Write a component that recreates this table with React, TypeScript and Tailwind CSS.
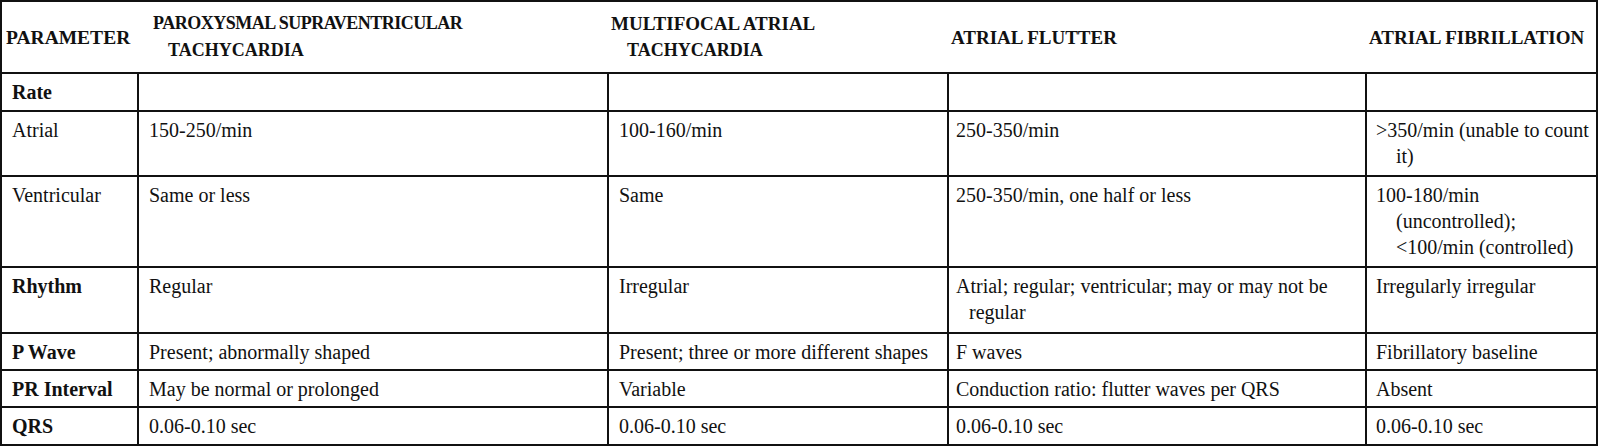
import React from "react";

type Row = {
  label: string;
  bold?: boolean;
  height: string;
  cells: string[][];
};

const cols = "grid grid-cols-[135px_470px_340px_418px_1fr]";

const pads = ["pl-[10px]", "pl-[10px]", "pl-[10px]", "pl-[7px]", "pl-[9px]"];
const hangs = ["pl-[20px]", "pl-[20px]", "pl-[13px]", "pl-[20px]"];

const rows: Row[] = [
  { label: "Rate", bold: true, height: "h-[38px]", cells: [[], [], [], []] },
  {
    label: "Atrial",
    height: "h-[65px]",
    cells: [
      ["150-250/min"],
      ["100-160/min"],
      ["250-350/min"],
      [">350/min (unable to count", "it)"],
    ],
  },
  {
    label: "Ventricular",
    height: "h-[91px]",
    cells: [
      ["Same or less"],
      ["Same"],
      ["250-350/min, one half or less"],
      ["100-180/min", "(uncontrolled);", "<100/min (controlled)"],
    ],
  },
  {
    label: "Rhythm",
    bold: true,
    height: "h-[66px]",
    cells: [
      ["Regular"],
      ["Irregular"],
      ["Atrial; regular; ventricular; may or may not be", "regular"],
      ["Irregularly irregular"],
    ],
  },
  {
    label: "P Wave",
    bold: true,
    height: "h-[37px]",
    cells: [
      ["Present; abnormally shaped"],
      ["Present; three or more different shapes"],
      ["F waves"],
      ["Fibrillatory baseline"],
    ],
  },
  {
    label: "PR Interval",
    bold: true,
    height: "h-[37px]",
    cells: [
      ["May be normal or prolonged"],
      ["Variable"],
      ["Conduction ratio: flutter waves per QRS"],
      ["Absent"],
    ],
  },
  {
    label: "QRS",
    bold: true,
    height: "h-[38px]",
    cells: [
      ["0.06-0.10 sec"],
      ["0.06-0.10 sec"],
      ["0.06-0.10 sec"],
      ["0.06-0.10 sec"],
    ],
  },
];

// first line flush, the rest hang in like the printed table
const Lines = ({ lines, hang }: { lines: string[]; hang: string }) => (
  <>
    {lines.map((line, i) => (
      <span key={i} className={i === 0 ? "block" : `block ${hang}`}>
        {line}
      </span>
    ))}
  </>
);

export default function App() {
  return (
    <div className="w-[1600px] h-[446px] bg-white font-['Liberation_Serif',serif] text-[#111]">
      <div className="w-[1598px] border-2 border-[#111]">
        <div className={`${cols} h-[70px] font-bold leading-[27px] whitespace-nowrap`}>
          <div className="flex items-center pl-[4px] text-[19.5px]">PARAMETER</div>
          <div className="flex flex-col justify-center pl-[16px] text-[18px]">
            <span className="tracking-[-0.5px]">PAROXYSMAL SUPRAVENTRICULAR</span>
            <span className="pl-[15px]">TACHYCARDIA</span>
          </div>
          <div className="flex flex-col justify-center pl-[4px] text-[19px]">
            <span>MULTIFOCAL ATRIAL</span>
            <span className="pl-[16px] text-[18px]">TACHYCARDIA</span>
          </div>
          <div className="flex items-center pl-[4px] text-[19px]">ATRIAL FLUTTER</div>
          <div className="flex items-center pl-[4px] text-[19px]">ATRIAL FIBRILLATION</div>
        </div>
        {rows.map((row) => (
          <div
            key={row.label}
            className={`${cols} ${row.height} border-t-2 border-[#111] text-[20px] leading-[26px]`}
          >
            <div className={`pt-[5px] ${pads[0]} ${row.bold ? "font-bold" : ""}`}>
              {row.label}
            </div>
            {row.cells.map((c, i) => (
              <div
                key={i}
                className={`pt-[5px] border-l-2 border-[#111] whitespace-nowrap ${pads[i + 1]}`}
              >
                <Lines lines={c} hang={hangs[i]} />
              </div>
            ))}
          </div>
        ))}
      </div>
    </div>
  );
}
